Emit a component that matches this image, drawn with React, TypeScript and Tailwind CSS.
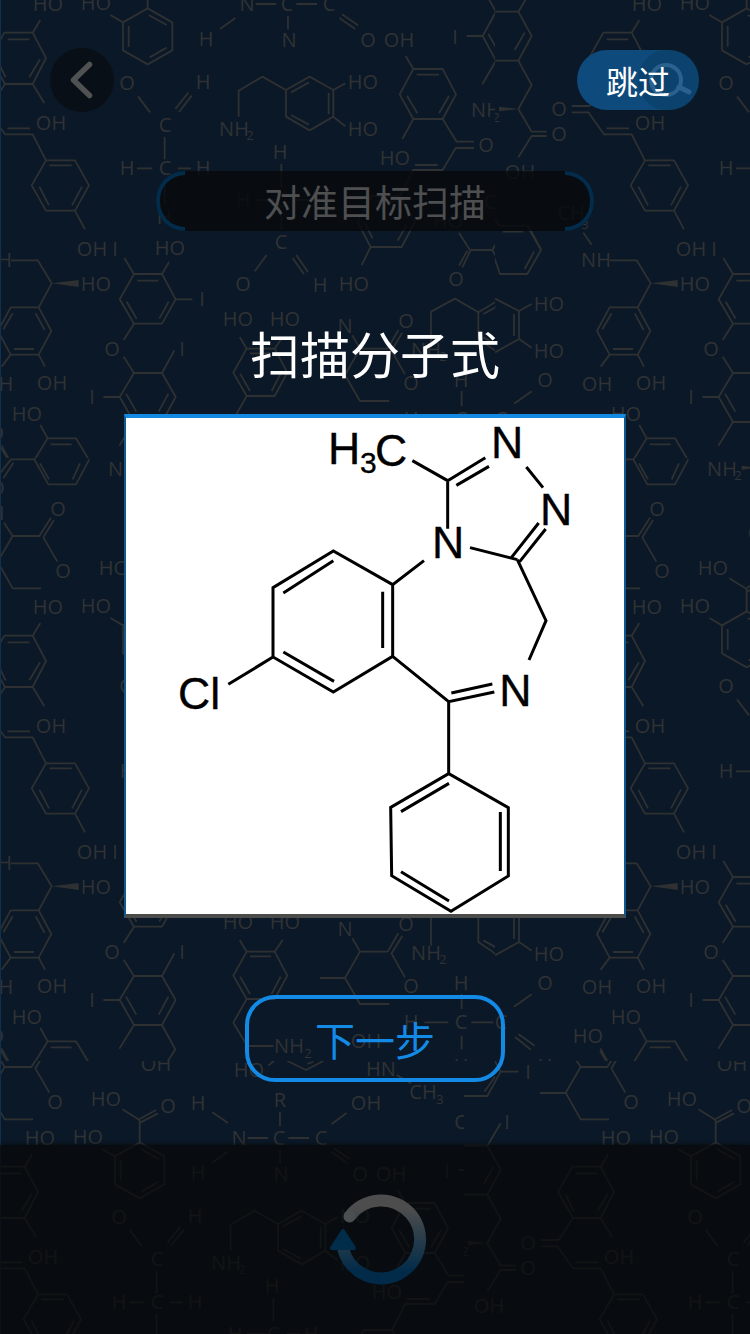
import React from "react";

type Label = [text: string, x: number, y: number];

/* Atom labels of one wallpaper tile, placed by their centres. */
const atoms: Label[] = [
  ["HO", 48, 4], ["HO", 96, 3], ["H", 206, 39], ["N", 247, 4], ["C", 287, 4], ["C", 329, 4],
  ["N", 289, 40], ["O", 368, 40], ["O", 127, 83], ["H", 203, 82], ["C", 165, 125],
  ["H", 127, 168], ["C", 165, 168], ["H", 203, 168], ["OH", 51, 123], ["NH", 234, 129],
  ["HO", 363, 82], ["HO", 363, 129], ["H", 280, 152], ["H", 243, 200], ["C", 281, 200],
  ["H", 319, 200], ["C", 281, 242], ["H", 164, 217], ["OH", 92, 249], ["I", 115, 249],
  ["HO", 170, 248], ["O", 243, 284], ["H", 320, 285], ["HO", 354, 284], ["HO", 96, 284],
  ["HO", 238, 319], ["HO", 285, 319], ["N", 345, 326], ["I", 202, 299], ["O", 112, 349],
  ["I", 182, 349], ["I", 92, 397], ["HO", 27, 414], ["OH", -2, 384], ["OH", 52, 383],
  ["O", 406, 321], ["NH", 426, 350], ["O", 411, 383], ["H", 461, 380], ["C", 461, 419],
  ["H", 411, 419], ["C", 501, 419], ["C", -98, 419], ["H", 461, 463], ["H", -54, 463],
  ["O", -54, 380], ["I", 455, 37], ["OH", 399, 40], ["O", 486, 145], ["HO", 395, 158],
  ["C", 490, 202], ["HO", 448, 221], ["NH", 486, 110], ["O", -40, 109], ["O", -40, 134],
  ["OH", -79, 172], ["CH", -28, 213], ["NH", -3, 260], ["O", 456, 279], ["HO", -50, 304],
  ["HO", -50, 351], ["NH", 289, 443], ["OH", 366, 438], ["HO", -11, 433],
  ["NH", 123, -134], ["O", 58, -94], ["O", 63, -32], ["HO", 114, -35], ["O", -3, -115],
  ["N", -3, -90], ["O", 176, -28], ["H", 206, -31], ["R", 288, -34], ["OH", 374, -31],
  ["HO", 257, -64], ["OH", 164, -70], ["HN", 389, -65], ["CH", 431, -42], ["I", -40, -62],
  ["O", 470, -12], ["I", -61, -12],
];

const subscripts: Label[] = [
  ["2", 250, 136], ["2", -103, 118], ["3", -14, 225], ["2", 443, 357],
  ["2", 308, 451], ["2", 139, -127], ["3", 448, -34],
];

/* Bonds, drawn at three units per pixel; each entry has its own origin. */
const bonds: { at: [number, number]; d: string }[] = [
  {
    at: [0, 0],
    d: `M13 98H98L138 174L98 252H15L-30 174ZM23 118H88M120 178L88 232M-8 180L17 232M98 98L121 60M98 252L133 310
    M15 252L-28 318H-82M-82 337H-32L15 403H98L138 481M22 385H90
    M138 481H225L267 556L225 632H138L95 556ZM148 496H215M246 560L216 616M118 560L147 616M225 632L255 688
    M443 25L517 67V151L443 193L369 151V67ZM446 45L500 75M500 143L449 172M386 78V140M331 45L369 67
    M660 87L706 54M767 12H828M889 12H951M864 48V88M1026 43L1074 76M1018 54L1066 87
    M414 289L450 337M526 327L565 278M537 336L575 287M494 411V478M411 505H457M533 505H573M494 540V612
    M716 350V272L787 230L858 270M929 230L1000 270V350L929 391L858 350V270ZM873 277L927 247M873 345L927 374
    M986 279V342M1000 270L1036 250M1000 350L1036 379M844 492V560M765 600H825M885 600H925M844 635V690
    M1115 588H1200L1245 665L1205 741H1112L1072 665ZM1092 665L1118 715M1220 675L1193 722M1125 604H1192M1112 741L1085 795`,
  },
  {
    at: [1125, 0],
    d: `M115 207H203L243 283L203 357H115L74 283ZM125 224H192M222 288L192 340M96 287L127 340M115 207L92 168
    M115 357L82 417M203 357L245 425H297M297 444H242L203 510H115L75 588M120 495H188
    M340 -5L363 35L323 108L363 182L322 253M275 108H323M340 102L364 144M252 698L285 750`,
  },
  {
    at: [-672, 0],
    d: `M343 35H430L470 108L430 182H343M430 35L470 -32M449 98L419 150M430 182L470 255L430 327L470 395H515
    M515 408H470L430 472M360 655L372 677H460L498 748M625 698L650 734`,
  },
  {
    at: [0, 690],
    d: `M33 91H113L155 160L116 232M32 232H116L154 303L116 374H32L-6 303ZM107 250L134 300M38 250L10 298M42 357H102
    M32 374L5 410M116 374L135 410M402 132H486L527 208L486 281H402L359 208ZM412 152H475M506 215L478 266M380 215L410 266
    M402 132L373 84M486 132L507 96M527 208H577M402 281L371 330M371 380L402 429H486L527 501L486 576H402L359 501L402 429
    M486 429L523 361M310 501H359M378 491L409 545M505 491L476 545M402 576L358 647M486 576L526 649L500 690
    M764 124L800 75M878 84L912 133M889 75L924 126M121 585L143 625H228L267 690M152 643H215M143 625L103 690M3 653L25 690`,
  },
  {
    at: [1125, 690],
    d: `M287 60L262 112M277 62L252 107M287 60H352L366 84M352 60L366 36M168 338V245L240 206L310 247V327L368 367
    M310 247L368 212M325 252L366 230M325 322L366 345`,
  },
  {
    at: [-672, 690],
    d: `M350 60L375 132H457L498 60L455 -15M477 65L449 117M383 5H445M360 206L432 243V327L360 367M345 240L362 228
    M417 252V318M432 243L470 222M432 327L470 353`,
  },
  {
    at: [0, 861],
    d: `M740 185H824L862 257L824 327H740L700 257ZM750 199H813M720 260L750 312M842 260L815 312M740 185L719 150M824 185L848 150
    M740 327L700 398L742 468H820M1057 145L1080 185L1035 264L1080 342H1168M960 264H1035M1080 185H1163L1195 130
    M1175 190L1207 137M1173 188L1215 262`,
  },
  { at: [1125, 861], d: "M260 312V357M148 397H220M289 397H355M260 437V478" },
  { at: [-672, 861], d: "M417 350L470 313M430 432L479 467M420 441L468 479M676 475L697 513" },
  {
    at: [0, -399],
    d: `M268 -32L228 43H145L103 -32M240 -20L218 28M120 -20L147 28M103 -32L118 -60M103 -32H33L0 10M40 -22L10 25
    M12 158L38 198L-7 275L38 355H123M-84 276H-7M38 198H118L153 143M130 202L162 150M130 202L172 275`,
  },
  {
    at: [24, -132],
    d: "M419 157V90L367 58M419 87L468 60M422 97L474 70M637 67L684 99M840 66V108M995 102L1040 69",
  },
  { at: [24, -732], d: "M805 527L825 510M862 513L918 540L970 513M922 522L940 515M1085 510H1105" },
  { at: [1149, -732], d: "M65 555L108 580" },
  { at: [-579, -732], d: "M360 513L377 545H430M377 545L337 618H267M360 560L328 605" },
];

const wedges = [
  "M-242 327L-300 320V334Z",
  "M1555 327L1497 320V334Z",
  "M155 850L236 840V861Z",
  "M428 -412L480 -406L428 -400Z",
];

function Wallpaper() {
  return (
    <svg
      aria-hidden="true"
      className="absolute inset-0 size-full"
      viewBox="0 0 750 1334"
      preserveAspectRatio="xMidYMin slice"
    >
      <defs>
        <clipPath id="tile-area">
          <rect x="-104" y="-145" width="599" height="603" />
        </clipPath>
        <clipPath id="upper-rows">
          <rect x="0" y="0" width="750" height="1061" />
        </clipPath>
        <clipPath id="last-row-left">
          <rect x="0" y="1061" width="464" height="273" />
        </clipPath>
        <clipPath id="last-row-right">
          <rect x="464" y="1061" width="286" height="273" />
        </clipPath>
        <g id="tile" clipPath="url(#tile-area)">
          <g transform="scale(0.33333)" fill="none" stroke="#2e3032" strokeWidth="5.5" strokeLinejoin="round">
            {bonds.map((b, i) => (
              <path key={i} d={b.d} transform={`translate(${b.at[0]} ${b.at[1]})`} />
            ))}
            {wedges.map((d) => (
              <path key={d} d={d} fill="#2e3032" stroke="none" />
            ))}
          </g>
          <g fill="#303234" textAnchor="middle" fontFamily="'Open Sans', 'Noto Sans', sans-serif">
            {atoms.map(([t, x, y], i) => (
              <text key={i} x={x} y={y + 7} fontSize="20">{t}</text>
            ))}
            {subscripts.map(([t, x, y], i) => (
              <text key={i} x={x} y={y + 4} fontSize="13">{t}</text>
            ))}
          </g>
        </g>
      </defs>
      <g clipPath="url(#upper-rows)">
        <use href="#tile" />
        <use href="#tile" x="599" />
        <use href="#tile" y="603" />
        <use href="#tile" x="599" y="603" />
      </g>
      <g clipPath="url(#last-row-left)">
        <use href="#tile" x="-8" y="1134" />
      </g>
      <g clipPath="url(#last-row-right)">
        <use href="#tile" x="568" y="1134" />
      </g>
      <rect width="1" height="1334" fill="#10304f" />
    </svg>
  );
}

function Molecule() {
  return (
    <svg role="img" aria-label="分子式" className="block w-full" viewBox="18 24 1494 1488">
      <path
        fill="none"
        stroke="#000"
        strokeWidth="9"
        d="M877 152L983 212L1096 143M1009 226L1107 169M983 212V356M1219 171L1269 233M1050 413L1192 449M1174 443L1256 339M1199 455L1277 357
        M1192 449L1278 632L1227 750M912 452L818 524L640 423L459 533V741L640 846L818 739V524M640 452L490 549M788 545V714M490 726L642 814
        M459 741L325 823M818 739L986 875L1123 846M994 849L1117 822M986 875V1091L1165 1193V1398L993 1504L815 1397L812 1192L986 1091
        M987 1120L843 1205M1141 1206V1383M843 1385L987 1473"
      />
      <g fill="#000" stroke="#000" strokeWidth="1" fontFamily="'Liberation Sans', Arial, sans-serif" fontSize="134">
        <text x="624" y="163">H</text>
        <text x="720" y="188" fontSize="90">3</text>
        <text x="765" y="167">C</text>
        <text x="1113" y="145">N</text>
        <text x="1260" y="344">N</text>
        <text x="936" y="445">N</text>
        <text x="1138" y="887">N</text>
        <text x="174" y="897">Cl</text>
      </g>
    </svg>
  );
}

function BackIcon() {
  return (
    <svg aria-hidden="true" className="size-16" viewBox="0 0 64 64">
      <path d="M39.500 16.500L23.500 32L39.500 47.500" fill="none" stroke="#505152" strokeWidth="5.500" strokeLinecap="round" strokeLinejoin="round" />
    </svg>
  );
}

function SearchIcon() {
  return (
    <svg aria-hidden="true" className="absolute inset-0 size-full" viewBox="0 0 122 60" fill="none" stroke="#2a618f">
      <circle cx="92" cy="30" r="31" fill="#08192b" fillOpacity="0.15" stroke="none" />
      <circle cx="89" cy="30" r="15" strokeWidth="4" />
      <path d="M102 37L112 42" strokeWidth="5" strokeLinecap="round" />
    </svg>
  );
}

function ScanSpinner() {
  return (
    <svg aria-hidden="true" className="w-25" viewBox="0 0 100 92">
      <defs>
        <linearGradient id="spin" gradientUnits="userSpaceOnUse" x1="0" y1="1" x2="0" y2="91">
          <stop offset="0.15" stopColor="#4d4d4d" />
          <stop offset="0.85" stopColor="#012b49" />
        </linearGradient>
      </defs>
      <path d="M19.500 22.500A39 39 0 1 1 13 54" fill="none" stroke="url(#spin)" strokeWidth="12" />
      <circle cx="19.500" cy="22.500" r="6" fill="#4a4f52" />
      <path d="M13 37L24 54H2Z" fill="#012c4a" stroke="#012c4a" strokeWidth="4" strokeLinejoin="round" />
    </svg>
  );
}

export default function App() {
  return (
    <main className="relative flex min-h-screen flex-col overflow-hidden bg-[#0b1827] font-['Noto_Sans_CJK_SC',sans-serif]">
      <Wallpaper />
      <header className="relative flex items-center justify-between pt-12 pr-[51px] pl-[50px]">
        <button type="button" aria-label="返回" className="rounded-full bg-[#090f16]">
          <BackIcon />
        </button>
        <button
          type="button"
          className="relative h-[60px] w-[122px] overflow-hidden rounded-full bg-[#0e4a7b] text-[32px] leading-[60px] text-white"
        >
          <SearchIcon />
          <span className="relative">跳过</span>
        </button>
      </header>

      <div className="relative mx-auto mt-[59px] h-[60px] w-[438px] rounded-full bg-[#080b0e]/85 text-center text-[37px] leading-[60px] text-[#4e4f50]">
        <span className="absolute inset-y-0 left-0 w-[29px] rounded-l-[30px] border-y-4 border-l-4 border-[#022c4a]" />
        <span className="absolute inset-y-0 right-0 w-[29px] rounded-r-[30px] border-y-4 border-r-4 border-[#022c4a]" />
        <p className="relative">对准目标扫描</p>
      </div>

      <section className="relative flex flex-col items-center">
        <h1 className="mt-[85px] text-[50px] leading-[72px] font-normal text-white">扫描分子式</h1>
        <div className="mt-[26px] w-[502px] border-x-2 border-t-4 border-b-4 border-x-[#0f5a92] border-t-[#128ae4] border-b-[#4b4b4a] bg-white">
          <Molecule />
        </div>
        <button
          type="button"
          className="mt-[77px] h-[87px] w-[260px] rounded-[30px] border-4 border-[#128ae6] text-[40px] leading-[78px] text-[#128ae6]"
        >
          下一步
        </button>
      </section>

      <footer className="relative mt-[63px] flex flex-1 justify-center bg-[#070908]/72 pt-[49px] pb-12 pl-[10px] shadow-[0_0_4px_#070a0b]">
        <ScanSpinner />
      </footer>
    </main>
  );
}
